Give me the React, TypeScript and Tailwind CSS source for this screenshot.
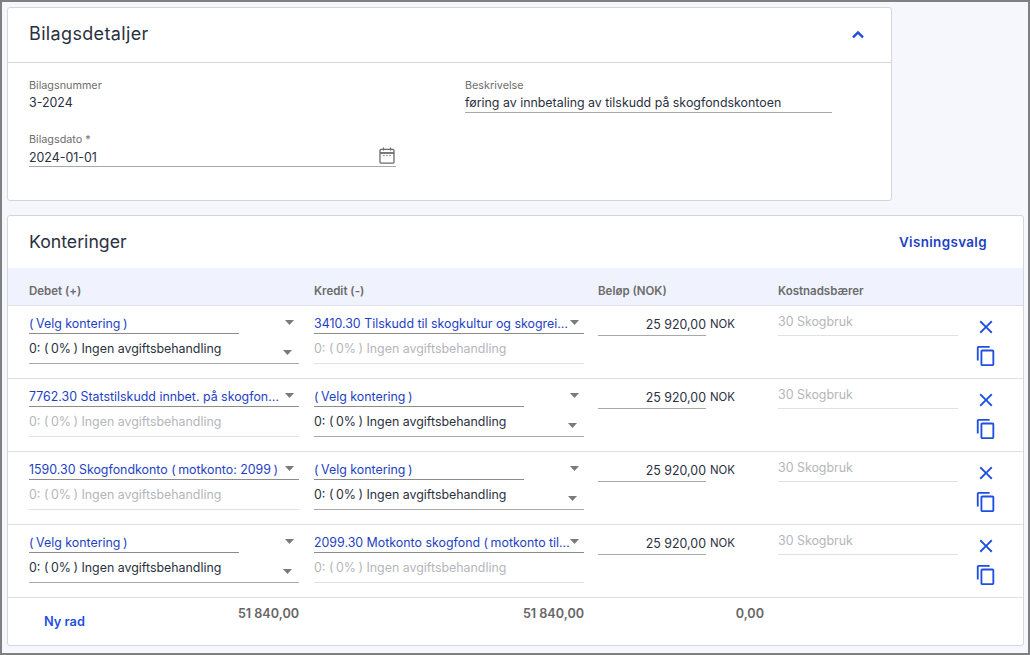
import * as React from "react";
import { MdClose, MdContentCopy } from "react-icons/md";

const font = "font-['Inter',sans-serif]";

function Caret({ className = "" }: { className?: string }) {
  return (
    <svg width="9" height="5" viewBox="0 0 9 5" className={className}>
      <path d="M0 0h9L4.5 5z" fill="#7a7a7a" />
    </svg>
  );
}

function CalendarIcon() {
  return (
    <svg width="16" height="17" viewBox="0 0 16 17" fill="none" stroke="#6b6b6b" strokeWidth="1.3">
      <rect x="1" y="2.4" width="14" height="13.8" rx="1.3" />
      <path d="M1 6h14" strokeWidth="1.8" />
      <path d="M4.5 0.4v3M11.5 0.4v3" />
      <path d="M4.2 8.6h1.4M7.3 8.6h1.4M10.4 8.6h1.4" strokeWidth="1" />
    </svg>
  );
}

function ChevronUp() {
  return (
    <svg width="14" height="9" viewBox="0 0 14 9" fill="none" stroke="#1f4fe0" strokeWidth="2.4">
      <path d="M2 7.4l5-5 5 5" />
    </svg>
  );
}

// parentesene står litt lenger fra teksten i referansen
function Spaced({ text }: { text: string }) {
  return (
    <>
      {text.split(/([()])/).map((part, i) =>
        part === "(" ? (
          <span key={i} className="mr-[2.5px]">(</span>
        ) : part === ")" ? (
          <span key={i} className="ml-[2.5px]">)</span>
        ) : (
          part
        )
      )}
    </>
  );
}

// konto-velger: tom verdi har kortere strek og pil utenfor
function AccountSelect({ value }: { value: string | null }) {
  if (!value) {
    return (
      <div className="flex h-[28px] items-start">
        <div className="h-[28px] w-[210px] border-b border-[#8c8c8c] pt-[8px] text-[12.4px] leading-[19px] text-[#1e3fc4]">
          <Spaced text="(Velg kontering)" />
        </div>
        <Caret className="ml-[46px] mt-[14px]" />
      </div>
    );
  }
  return (
    <div className="flex h-[28px] items-start border-b border-[#8c8c8c] pt-[8px]">
      <div className="w-[256px] truncate text-[12.4px] leading-[19px] text-[#1e3fc4]">
        <Spaced text={value} />
      </div>
      <Caret className="mt-[6px]" />
    </div>
  );
}

function TaxSelect({ disabled }: { disabled: boolean }) {
  return (
    <div
      className={`mt-[1px] flex h-[29px] items-start border-b pt-[4px] text-[12.4px] leading-[19px] ${
        disabled ? "border-[#e2e2e4] text-[#b5b6bb]" : "border-[#a8a8a8] text-[#2a3040]"
      }`}
    >
      <span className="flex-1">
        <Spaced text="0: (0%) Ingen avgiftsbehandling" />
      </span>
      {!disabled && <Caret className="mr-[7px] mt-[11px]" />}
    </div>
  );
}

function Cell({ value }: { value: string | null }) {
  return (
    <div className="w-[270px]">
      <AccountSelect value={value} />
      <TaxSelect disabled={!!value} />
    </div>
  );
}

const rows = [
  { debet: null, kredit: "3410.30 Tilskudd til skogkultur og skogreisning" },
  { debet: "7762.30 Statstilskudd innbet. på skogfondskonto", kredit: null },
  { debet: "1590.30 Skogfondkonto (motkonto: 2099)", kredit: null },
  { debet: null, kredit: "2099.30 Motkonto skogfond (motkonto til 1590)" },
];

function Row({ debet, kredit }: { debet: string | null; kredit: string | null }) {
  return (
    <div className="flex h-[73px] border-t border-[#dfe0e3] pl-[21px]">
      <Cell value={debet} />
      <div className="ml-[15px]">
        <Cell value={kredit} />
      </div>
      <div className="ml-[14px] flex h-[30px] w-[166px] items-start">
        <div className="h-[30px] w-[108px] border-b border-[#a8a8a8] pt-[9px] text-right text-[12.4px] leading-[19px] text-[#2a3040]">
          25 920,00
        </div>
        <span className="ml-[4px] pt-[9px] text-[11.4px] leading-[19px] text-[#2a3040]">NOK</span>
      </div>
      <div className="ml-[14px] h-[30px] w-[180px] border-b border-[#e2e2e4] pt-[6px] text-[12.4px] leading-[19px] text-[#b5b6bb]">
        30 Skogbruk
      </div>
      <div className="ml-[16px] flex w-[24px] flex-col items-center pt-[10px] text-[#1f4fe0]">
        <MdClose size={22} />
        <MdContentCopy size={22} className="mt-[7px]" />
      </div>
    </div>
  );
}

export default function App() {
  return (
    <div className={`${font} h-[655px] w-[1030px] overflow-hidden border-2 border-[#808080] bg-[#f5f7fc] pl-[5px] pr-[4px] pt-[5px] text-[#2a3040]`}>
      <div className="h-[194px] w-[885px] rounded-[3px] border border-[#d5d6da] bg-white">
        <div className="flex h-[55px] items-center justify-between border-b border-[#d5d6da] pl-[21px] pr-[26px]">
          <h2 className="-mt-[4px] text-[18px] font-normal tracking-[0.35px]">Bilagsdetaljer</h2>
          <span className="-mt-[2px]">
            <ChevronUp />
          </span>
        </div>
        <div className="flex pl-[21px]">
          <div className="w-[367px]">
            <div className="mt-[16px] text-[10.8px] leading-[14px] text-[#6e6e6e]">Bilagsnummer</div>
            <div className="text-[12.4px] leading-[19px]">3-2024</div>
            <div className="mt-[21px] text-[10.8px] leading-[14px] text-[#6e6e6e]">Bilagsdato *</div>
            <div className="flex h-[20px] items-center justify-between border-b border-[#a8a8a8] pt-[3px] text-[12.4px]">
              <span>2024-01-01</span>
              <span className="-mt-[3px] mr-[1px] self-start">
                <CalendarIcon />
              </span>
            </div>
          </div>
          <div className="ml-[69px] w-[367px]">
            <div className="mt-[16px] text-[10.8px] leading-[14px] text-[#6e6e6e]">Beskrivelse</div>
            <div className="h-[20px] border-b border-[#a8a8a8] text-[12.4px] leading-[19px]">
              føring av innbetaling av tilskudd på skogfondskontoen
            </div>
          </div>
        </div>
      </div>
      <div className="mt-[14px] h-[431px] w-[1017px] rounded-[3px] border border-[#d5d6da] bg-white">
        <div className="flex h-[52px] items-center justify-between pl-[21px] pr-[36px]">
          <h2 className="text-[17.7px] font-normal">Konteringer</h2>
          <button className="mt-[1px] text-[13.4px] font-semibold tracking-[0.38px] text-[#1e3fc4]">Visningsvalg</button>
        </div>
        <div className="flex h-[37px] items-center bg-[#f0f3fd] pl-[21px] pt-[11px] text-[11.5px] font-semibold text-[#6b6b6b]">
          <span className="w-[285px]">Debet (+)</span>
          <span className="w-[284px]">Kredit (-)</span>
          <span className="w-[180px]">Beløp (NOK)</span>
          <span>Kostnadsbærer</span>
        </div>
        {rows.map((r, i) => (
          <Row key={i} debet={r.debet} kredit={r.kredit} />
        ))}
        <div className="flex h-[48px] border-t border-[#dfe0e3] pl-[21px] text-[12.6px] font-semibold leading-[19px] text-[#666666]">
          <div className="flex w-[270px] justify-between pt-[6px]">
            <button className="ml-[15px] mt-[8px] h-[19px] text-[12.8px] font-semibold leading-[19px] text-[#1f4fe0]">Ny rad</button>
            <span>51 840,00</span>
          </div>
          <span className="ml-[15px] w-[270px] pt-[6px] text-right">51 840,00</span>
          <span className="ml-[14px] w-[166px] pt-[6px] text-right">0,00</span>
        </div>
      </div>
    </div>
  );
}
